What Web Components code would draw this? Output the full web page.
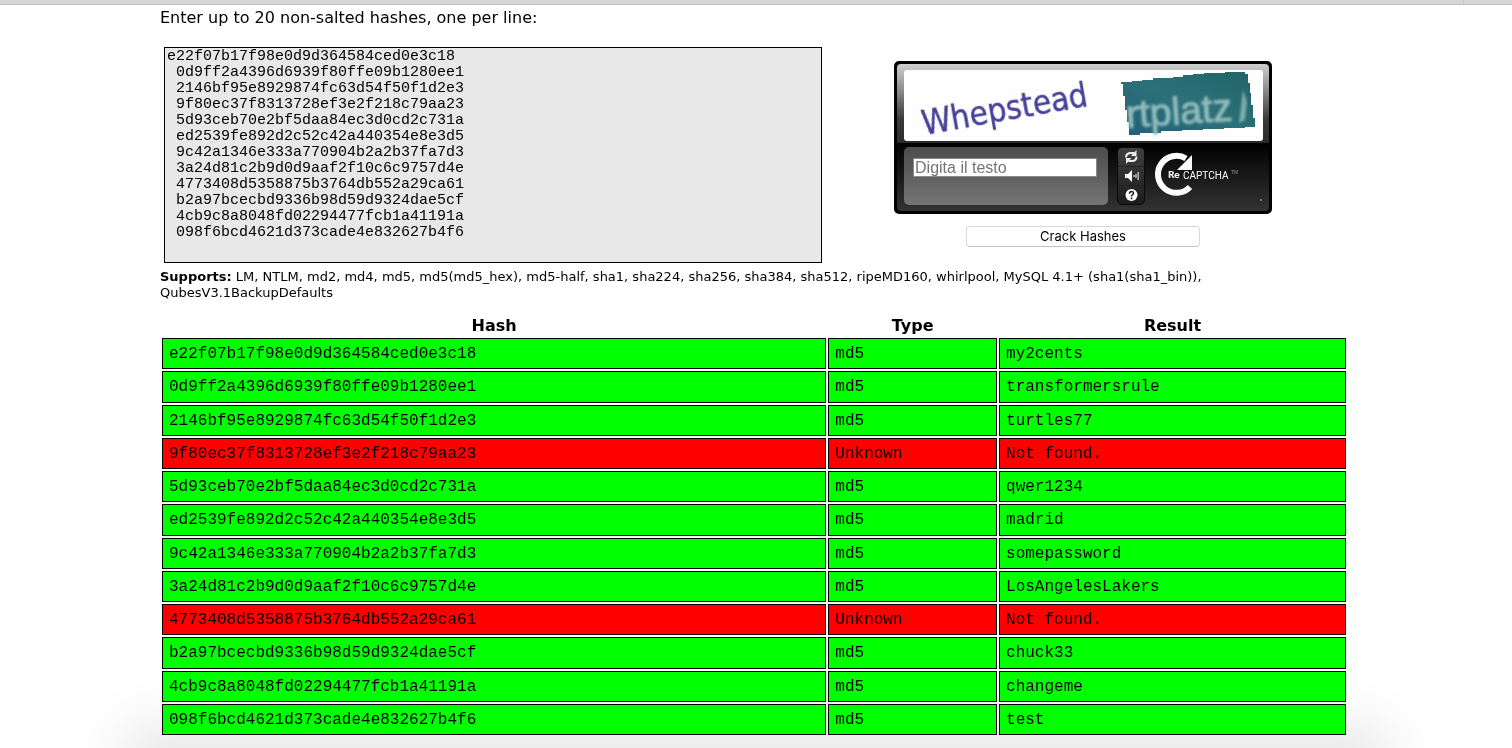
<!DOCTYPE html>
<html lang="en">
<head>
<meta charset="utf-8">
<title>Free Password Hash Cracker</title>
<style>
  body { margin: 0; background: #fff; color: #000; font: 16px/20px "DejaVu Sans", Verdana, sans-serif; }
</style>
</head>
<body>
<cracker-page>
  <hash-form>
    <captcha-box></captcha-box>
  </hash-form>
  <supported-types></supported-types>
  <results-table></results-table>
</cracker-page>

<template id="t-page">
  <style>
    :host { display: block; }
    header { display: flex; justify-content: flex-end; height: 4px; background: #d6d6d6; border-bottom: 1px solid #c2c2c2; padding-right: 48px; }
    header i { width: 1px; background: #c8c8c8; }
    main { display: block; padding: 3px 164px 11px 160px; }
    .glow { position: fixed; z-index: -1; left: 140px; right: 140px; bottom: -24px; height: 24px; background: #eee; border-radius: 20px; box-shadow: 0 0 60px 20px #e4e4e4; }
  </style>
  <header><i></i></header>
  <main><slot></slot></main>
  <div class="glow"></div>
</template>

<template id="t-form">
  <style>
    :host { display: block; }
    label { display: block; }
    .row { display: grid; grid-template-columns: 29fr 23fr; margin: 19px 4px 0; }
    textarea { box-sizing: border-box; display: block; width: 100%; height: 216px; margin: 0; padding: 1px 2px 0; border: 1px solid #000; border-radius: 0; background: #e8e8e8; color: #000; font: 15px/16px "Liberation Mono", "Courier New", monospace; resize: none; outline: none; overflow: hidden; }
    .side { display: flex; flex-direction: column; align-items: center; gap: 12px; padding-top: 14px; }
    button { box-sizing: border-box; width: 234px; height: 21px; padding: 0; border: 1px solid #d8d8d8; border-bottom-color: #c4c4c4; border-radius: 4px; background: #fff; color: #000; font: 13px/19px Inter, sans-serif; }
  </style>
  <form onsubmit="return false">
    <label for="hashes">Enter up to 20 non-salted hashes, one per line:</label>
    <div class="row">
      <textarea id="hashes" spellcheck="false"></textarea>
      <div class="side">
        <slot></slot>
        <button type="submit">Crack Hashes</button>
      </div>
    </div>
  </form>
</template>

<template id="t-captcha">
  <style>
    :host { display: block; box-sizing: border-box; width: 378px; border: 3px solid #000; border-radius: 5px; background: #000; }
    .picture { padding: 6px 6px 2px 7px; border-radius: 4px 4px 0 0; background: linear-gradient(#cfcfcf, #a8a8a8 20%, #3a3a3a 70%, #2a2a2a); }
    .picture svg { display: block; width: 100%; height: 71px; border-radius: 3px; background: #fefefe; }
    .panel { display: flex; align-items: flex-start; height: 64px; padding: 4px 0 0 7px; box-sizing: content-box; border-radius: 0 0 4px 4px; background: linear-gradient(#000, #333); }
    .answer { box-sizing: border-box; width: 204px; height: 58px; padding: 11px 9px; border-radius: 5px; background: linear-gradient(#4c4c4c, #747474); }
    input { box-sizing: border-box; display: block; width: 184px; height: 19px; padding: 0 1px; border: 1px solid #8a8a8a; background: #fff; font: 16px/17px "Liberation Sans", Arial, sans-serif; color: #000; outline: none; }
    input::placeholder { color: #757575; opacity: 1; }
    .tools { box-sizing: border-box; display: flex; flex-direction: column; width: 28px; height: 58px; margin: 0 9px; border: 1px solid #0a0a0a; border-radius: 5px; background: linear-gradient(#404040, #1c1c1c); }
    .tools button { display: grid; place-items: center; flex: 1; padding: 0; border: 0; border-top: 1px solid #222; background: none; }
    .tools button:first-child { border-top: 0; }
    .tools svg { display: block; width: 16px; height: 14px; }
    .logo { display: block; width: 108px; height: 58px; }
  </style>
  <div class="picture">
    <svg viewBox="0 0 359 71" role="img" aria-label="Captcha words">
      <defs>
        <linearGradient id="teal" x1="0" y1="1" x2="1" y2="0">
          <stop offset="0" stop-color="#215f78"/><stop offset=".5" stop-color="#2c7179"/><stop offset="1" stop-color="#206468"/>
        </linearGradient>
        <filter id="soft"><feGaussianBlur stdDeviation="0.6"/></filter>
        <filter id="faint"><feGaussianBlur stdDeviation="1"/></filter>
      </defs>
      <text transform="translate(20 65) rotate(-10)" font-family="DejaVu Sans Condensed, DejaVu Sans, sans-serif" font-size="33" fill="#463f97" stroke="#463f97" stroke-width=".4" filter="url(#soft)">Whepstead</text>
      <path d="M217 12h11v-1h10v-1h11v-2h20v-1h10v-2h10v-1h11v-1h21v-1h20v2h3v9h2v10h1v12h2v13h2v9h-10v1h-21v1h-21v1h-21v1h-21v2h-21v2h-11v-13h-2v-12h-2v-14h-2v-12h-2z" fill="url(#teal)"/>
      <text transform="translate(223 58) rotate(-4)" font-family="Liberation Sans, Arial, sans-serif" font-size="39" fill="#8fbcbc" stroke="#8fbcbc" filter="url(#faint)">rtplatz</text>
      <path d="M339 20l-4 33 6-3 2-18z" fill="#8dbcb8" opacity=".8" filter="url(#faint)"/>
    </svg>
  </div>
  <div class="panel">
    <div class="answer"><input type="text" placeholder="Digita il testo" aria-label="Digita il testo"></div>
    <div class="tools">
      <button type="button" aria-label="New words"><svg viewBox="0 0 16 14" fill="none" stroke="#eee" stroke-width="2"><path d="M3 7.500C3 4.500 5 3 8 3h3M13.500 6.500c0 3-2 4.500-5 4.500h-3"/><path d="M13.500 0v6H8zM3 14V8h5.500z" fill="#eee" stroke="none"/></svg></button>
      <button type="button" aria-label="Audio"><svg viewBox="0 0 16 14"><path d="M2 5h3l4-4v12L5 9H2z" fill="#fff"/><path d="M11 6v2M13 5v4M15.200 3v8" stroke="#ddd" stroke-width="1.200"/></svg></button>
      <button type="button" aria-label="Help"><svg viewBox="0 0 16 14"><circle cx="8.500" cy="7" r="6" fill="#fff"/><path d="M6.500 5.800c0-3 4-2.800 4-.6 0 1.400-2 1.400-2 3.200M8.500 9.500v1.700" fill="none" stroke="#222" stroke-width="1.600"/></svg></button>
    </div>
    <svg class="logo" viewBox="0 0 108 58" role="img" aria-label="reCAPTCHA">
      <path d="M32 11.500A18.500 18.500 0 1 0 36 40" fill="none" stroke="#fff" stroke-width="6"/>
      <path d="M38 8v15H23l5-5 6-6z" fill="#fff"/>
      <text x="14" y="31" font-family="Lato, sans-serif" font-weight="900" font-size="10" fill="#fff">Re</text>
      <text x="29" y="32" font-family="Roboto, sans-serif" font-size="10" fill="#fff">CAPTCHA</text>
      <text x="77" y="27" font-family="Liberation Sans, sans-serif" font-size="5" fill="#999">TM</text>
      <circle cx="107" cy="53" r="1" fill="#888"/>
    </svg>
  </div>
</template>

<template id="t-supports">
  <style>
    :host { display: block; }
    p { margin: 6px 140px 0 0; font-size: 13px; line-height: 16px; }
  </style>
  <p><b>Supports:</b> LM, NTLM, md2, md4, md5, md5(md5_hex), md5-half, sha1, sha224, sha256, sha384, sha512, ripeMD160, whirlpool, MySQL 4.1+ (sha1(sha1_bin)), QubesV3.1BackupDefaults</p>
</template>

<template id="t-results">
  <style>
    :host { display: block; margin-top: 12px; }
    table { width: 100%; height: 424px; table-layout: fixed; border-collapse: separate; border-spacing: 2px; }
    col.hash { width: 56.3%; }
    col.type { width: 14.3%; }
    th { padding: 0; height: 21px; line-height: 21px; }
    td { padding: 1px 6px 0; border: 1px solid #000; font: 16px/28px "Liberation Mono", "Courier New", monospace; }
    .ok td { background: #0f0; }
    .fail td { background: #f00; }
  </style>
  <table>
    <colgroup><col class="hash"><col class="type"><col></colgroup>
    <thead><tr><th>Hash</th><th>Type</th><th>Result</th></tr></thead>
    <tbody></tbody>
  </table>
</template>

<script>
  const results = [
    ["e22f07b17f98e0d9d364584ced0e3c18", "my2cents"],
    ["0d9ff2a4396d6939f80ffe09b1280ee1", "transformersrule"],
    ["2146bf95e8929874fc63d54f50f1d2e3", "turtles77"],
    ["9f80ec37f8313728ef3e2f218c79aa23", null],
    ["5d93ceb70e2bf5daa84ec3d0cd2c731a", "qwer1234"],
    ["ed2539fe892d2c52c42a440354e8e3d5", "madrid"],
    ["9c42a1346e333a770904b2a2b37fa7d3", "somepassword"],
    ["3a24d81c2b9d0d9aaf2f10c6c9757d4e", "LosAngelesLakers"],
    ["4773408d5358875b3764db552a29ca61", null],
    ["b2a97bcecbd9336b98d59d9324dae5cf", "chuck33"],
    ["4cb9c8a8048fd02294477fcb1a41191a", "changeme"],
    ["098f6bcd4621d373cade4e832627b4f6", "test"]
  ];

  class TemplateElement extends HTMLElement {
    constructor() {
      super();
      const template = document.getElementById(this.constructor.template);
      this.attachShadow({ mode: "open" }).append(template.content.cloneNode(true));
    }
  }

  class CrackerPage extends TemplateElement { static template = "t-page"; }
  class CaptchaBox extends TemplateElement { static template = "t-captcha"; }
  class SupportedTypes extends TemplateElement { static template = "t-supports"; }

  class HashForm extends TemplateElement {
    static template = "t-form";
    connectedCallback() {
      this.shadowRoot.querySelector("textarea").value = results.map(r => r[0]).join("\n ");
    }
  }

  class ResultsTable extends TemplateElement {
    static template = "t-results";
    connectedCallback() {
      const body = this.shadowRoot.querySelector("tbody");
      body.replaceChildren();
      for (const [hash, word] of results) {
        const row = body.insertRow();
        row.className = word ? "ok" : "fail";
        for (const text of [hash, word ? "md5" : "Unknown", word || "Not found."]) {
          row.insertCell().textContent = text;
        }
      }
    }
  }

  customElements.define("cracker-page", CrackerPage);
  customElements.define("hash-form", HashForm);
  customElements.define("captcha-box", CaptchaBox);
  customElements.define("supported-types", SupportedTypes);
  customElements.define("results-table", ResultsTable);
</script>
</body>
</html>
